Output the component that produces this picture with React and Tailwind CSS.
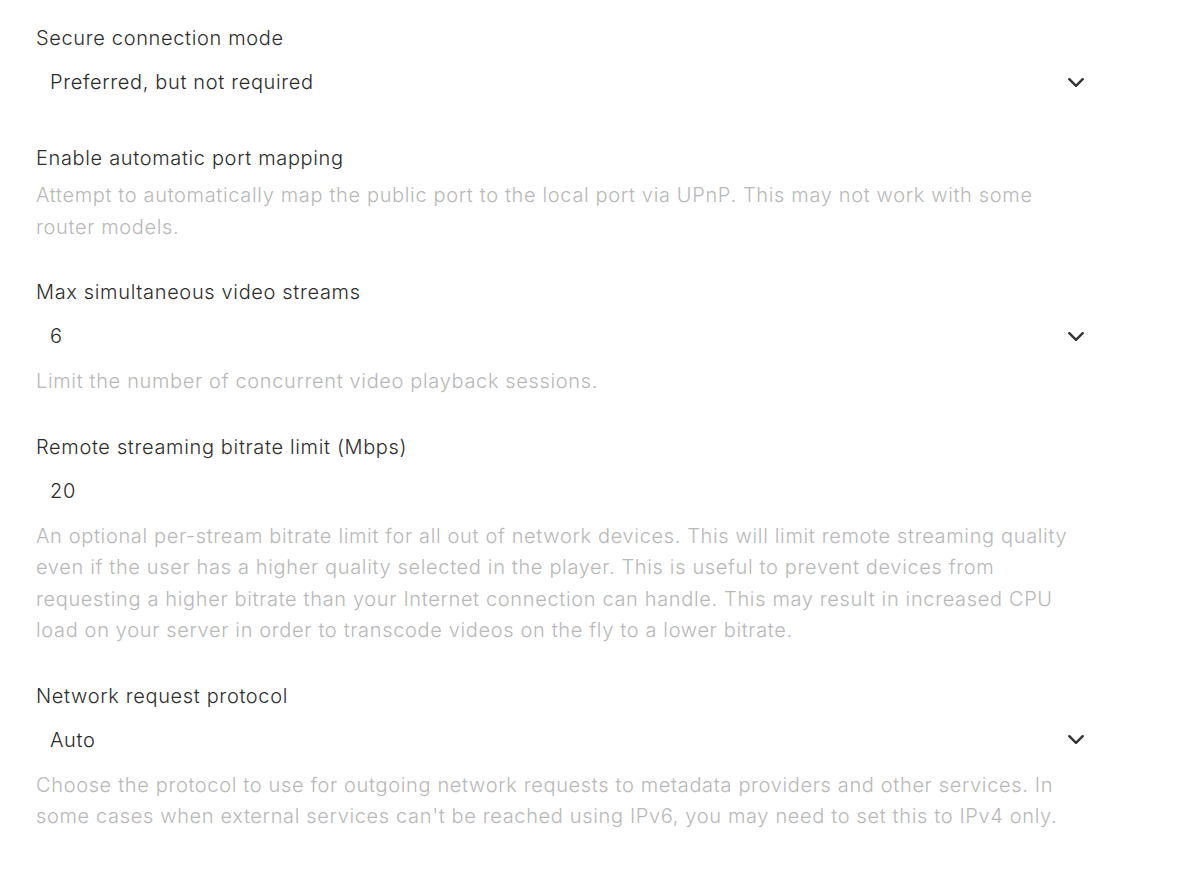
import { useState } from 'react';

const font = { fontFamily: 'Inter, "Noto Sans", sans-serif' };

function Chevron() {
  return (
    <svg width="16" height="9" viewBox="0 0 16 9" fill="none" className="shrink-0">
      <polyline points="1.3,1.2 8,7.8 14.7,1.2" stroke="#333333" strokeWidth="2.4" strokeLinecap="round" strokeLinejoin="round" />
    </svg>
  );
}

function SelectBox({ value }) {
  return (
    <button className="flex h-12 w-full items-center justify-between pl-[14px] pr-4 text-left text-[20px] font-light tracking-[0.65px] text-[#2a2a2a]">
      <span>{value}</span>
      <Chevron />
    </button>
  );
}

function InputBox({ value }) {
  const [v, setV] = useState(value);
  return (
    <input
      value={v}
      onChange={(e) => setV(e.target.value)}
      className="h-12 w-full bg-transparent pl-[14px] text-[20px] font-light tracking-[0.65px] text-[#2a2a2a] outline-none"
    />
  );
}

function Field({ label, children, desc, className = '' }) {
  return (
    <div className={`flex flex-col ${className}`}>
      <label className="text-[20px] font-light leading-7 tracking-[0.65px] text-[#2e2e2e]">{label}</label>
      {children && <div className="mt-[6px]">{children}</div>}
      {desc && (
        <p className={`${children ? 'mt-[6px]' : 'mt-[8px]'} max-w-[1040px] text-[20px] font-light leading-[31.5px] tracking-[0.65px] text-[#b8b8b8]`}>{desc}</p>
      )}
    </div>
  );
}

export default function App() {
  return (
    <div className="min-h-screen bg-white px-9 pt-6" style={font}>
      <div className="flex max-w-[1064px] flex-col gap-[35px]">
        <Field label="Secure connection mode" className="mb-[3px]">
          <SelectBox value="Preferred, but not required" />
        </Field>

        <Field
          label="Enable automatic port mapping"
          desc="Attempt to automatically map the public port to the local port via UPnP. This may not work with some router models."
        />

        <Field
          label="Max simultaneous video streams"
          desc="Limit the number of concurrent video playback sessions."
        >
          <SelectBox value="6" />
        </Field>

        <Field
          label="Remote streaming bitrate limit (Mbps)"
          desc="An optional per-stream bitrate limit for all out of network devices. This will limit remote streaming quality even if the user has a higher quality selected in the player. This is useful to prevent devices from requesting a higher bitrate than your Internet connection can handle. This may result in increased CPU load on your server in order to transcode videos on the fly to a lower bitrate."
        >
          <InputBox value="20" />
        </Field>

        <Field
          label="Network request protocol"
          desc="Choose the protocol to use for outgoing network requests to metadata providers and other services. In some cases when external services can't be reached using IPv6, you may need to set this to IPv4 only."
        >
          <SelectBox value="Auto" />
        </Field>
      </div>
    </div>
  );
}
